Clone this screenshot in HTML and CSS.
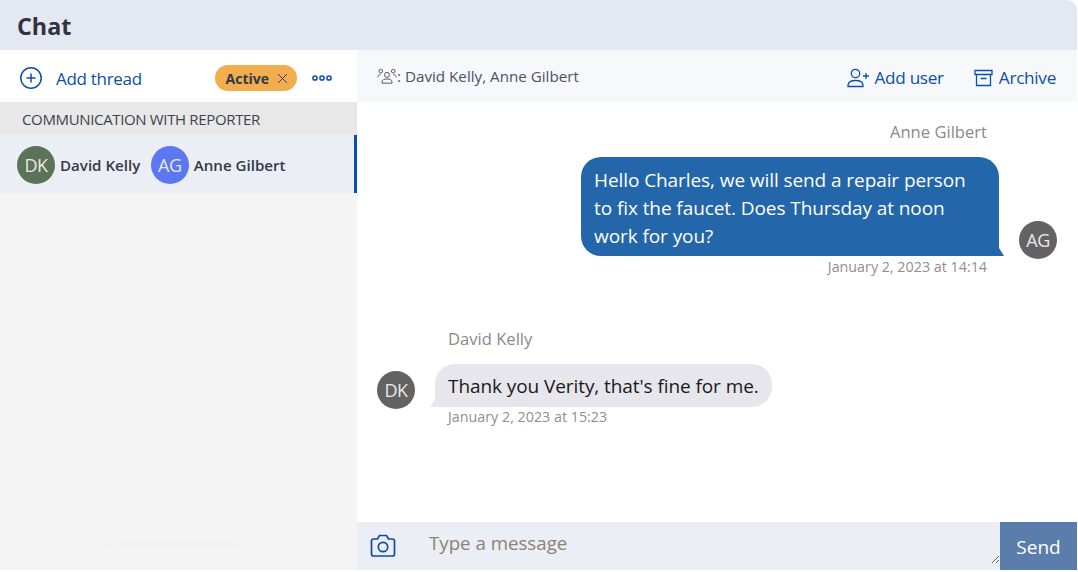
FILE: index.html
```html
<!DOCTYPE html>
<html lang="en">

<head>
    <meta charset="UTF-8">
    <title>Chat</title>
    <link rel="stylesheet" href="styles.css">
</head>

<body>
    <div class="chat">
        <div class="heading">
            <h1>Chat</h1>
        </div>

        <div class="columns">
            <div class="sidebar">
                <div class="thread-tools">
                    <svg class="icon-add" width="24" height="24" viewBox="0 0 24 24" fill="none" stroke="#0b4eac" stroke-width="1.5">
                        <circle cx="12" cy="12" r="10.2" />
                        <path d="M12 7.5v9M7.5 12h9" />
                    </svg>
                    <span class="add-thread">Add thread</span>
                    <span class="status-pill">Active
                        <svg width="11" height="11" viewBox="0 0 11 11" fill="none" stroke="#3a3a3a" stroke-width="1">
                            <path d="M1 1l9 9M10 1l-9 9" />
                        </svg>
                    </span>
                    <svg class="icon-more" width="20" height="6" viewBox="0 0 20 6" fill="none" stroke="#0b4eac" stroke-width="1.5">
                        <circle cx="3" cy="3" r="2.1" />
                        <circle cx="10" cy="3" r="2.1" />
                        <circle cx="17" cy="3" r="2.1" />
                    </svg>
                </div>
                <div class="group-title">COMMUNICATION WITH REPORTER</div>
                <div class="thread">
                    <span class="avatar green">DK</span>
                    <span class="thread-name">David Kelly</span>
                    <span class="avatar blue">AG</span>
                    <span class="thread-name">Anne Gilbert</span>
                </div>
            </div>

            <div class="main">
                <div class="toolbar">
                    <div class="people">
                        <svg width="20" height="17" viewBox="0 0 24 20" fill="none" stroke="#555b68" stroke-width="1.2">
                            <circle cx="12" cy="8" r="3" />
                            <circle cx="4.5" cy="3.5" r="2.2" />
                            <circle cx="19.5" cy="3.5" r="2.2" />
                            <path d="M6 18v-1.500c0-2.500 2.500-3.500 6-3.500s6 1 6 3.500V18zM1 11c0-2 1.500-3.500 3.500-3.500M23 11c0-2-1.500-3.500-3.500-3.500" />
                        </svg>
                        <span>: David Kelly, Anne Gilbert</span>
                    </div>
                    <div class="actions">
                        <span class="action">
                            <svg width="24" height="20" viewBox="0 0 24 20" fill="none" stroke="#0b4eac" stroke-width="1.300">
                                <circle cx="8.500" cy="5.500" r="4.200" />
                                <path d="M1 18.500v-1c0-3.500 3-5 7.500-5s7.500 1.500 7.500 5v1zM19 5v6M16 8h6" />
                            </svg>
                            Add user
                        </span>
                        <span class="action archive">
                            <svg width="19" height="18" viewBox="0 0 19 18" fill="none" stroke="#0b4eac" stroke-width="1.300">
                                <path d="M1 1.500h17v4H1zM2.500 5.500v11h14v-11M6.500 9.500h6" />
                            </svg>
                            Archive
                        </span>
                    </div>
                </div>

                <div class="messages">
                    <div class="message outgoing">
                        <div class="message-body">
                            <div class="sender">Anne Gilbert</div>
                            <div class="bubble">Hello Charles, we will send a repair person to fix the faucet. Does Thursday at noon work for you?</div>
                            <div class="time">January 2, 2023 at 14:14</div>
                        </div>
                        <span class="avatar grey">AG</span>
                    </div>
                    <div class="message incoming">
                        <span class="avatar grey">DK</span>
                        <div class="message-body">
                            <div class="sender">David Kelly</div>
                            <div class="bubble">Thank you Verity, that's fine for me.</div>
                            <div class="time">January 2, 2023 at 15:23</div>
                        </div>
                    </div>
                </div>

                <div class="composer">
                    <svg class="icon-camera" width="26" height="23" viewBox="0 0 26 23" fill="none" stroke="#0b4eac" stroke-width="1.700">
                        <path d="M3.500 5h4l2-3.500h7l2 3.500h4a2 2 0 0 1 2 2v13a2 2 0 0 1-2 2h-19a2 2 0 0 1-2-2V7a2 2 0 0 1 2-2z" />
                        <circle cx="13" cy="13" r="4.700" />
                    </svg>
                    <textarea class="message-input" placeholder="Type a message"></textarea>
                    <button class="send" type="button">Send</button>
                </div>
            </div>
        </div>
    </div>
</body>

</html>
```

FILE: styles.css
```css
body {
    margin: 0;
    background: #fff;
    font-family: "Open Sans", sans-serif;
    color: #323a47;
    overflow: hidden;
}

.chat {
    width: 1077px;
    height: 570px;
    display: flex;
    flex-direction: column;
}

.heading {
    height: 50px;
    padding: 2px 0 0 17px;
    box-sizing: border-box;
    display: flex;
    align-items: center;
    background: #e4e8f1;
    border-top-right-radius: 10px;
    flex: none;
}

h1 {
    margin: 0;
    font-size: 23.3px;
    font-weight: 700;
    color: #30343f;
}

.columns {
    flex: 1;
    display: flex;
    min-height: 0;
}

.sidebar {
    width: 357px;
    flex: none;
    background: radial-gradient(ellipse 130px 4px at 175px 493px, #f0f0f0, #f4f4f4);
    background-color: #f4f4f4;
}

.thread-tools {
    height: 52px;
    padding: 4px 25px 0 19px;
    box-sizing: border-box;
    display: flex;
    align-items: center;
    background: #fff;
}

.icon-add {
    flex: none;
}

.add-thread {
    margin-left: 13px;
    font-size: 17px;
    color: #0b4eac;
    letter-spacing: -0.3px;
}

.status-pill {
    margin-left: auto;
    height: 26px;
    padding: 0 9px 0 11px;
    display: flex;
    align-items: center;
    gap: 8px;
    border-radius: 13px;
    background: #f1ad4e;
    font-size: 14px;
    font-weight: 700;
    color: #323a47;
}

.icon-more {
    margin-left: 15px;
}

.group-title {
    height: 33px;
    padding: 1px 0 0 22px;
    box-sizing: border-box;
    display: flex;
    align-items: center;
    background: #e8e8e8;
    font-size: 15px;
    letter-spacing: -0.35px;
    color: #3d4450;
}

.thread {
    height: 58px;
    padding: 2px 0 0 17px;
    box-sizing: border-box;
    display: flex;
    align-items: center;
    background: #ebeef5;
    border-right: 3px solid #0b4eac;
}

.thread-name {
    margin-left: 5px;
    margin-right: 10.5px;
    font-size: 15.1px;
    font-weight: 600;
    color: #343a46;
}

.avatar {
    width: 38px;
    height: 38px;
    flex: none;
    display: flex;
    align-items: center;
    justify-content: center;
    border-radius: 50%;
    font-size: 18px;
    letter-spacing: -0.5px;
    color: #e8e8e8;
}

.avatar.green {
    background: #5b7356;
}

.avatar.blue {
    background: #5b78f0;
}

.avatar.grey {
    background: #636363;
}

.main {
    flex: 1;
    min-width: 0;
    display: flex;
    flex-direction: column;
}

.toolbar {
    height: 52px;
    flex: none;
    padding: 0 21px 0 20px;
    box-sizing: border-box;
    display: flex;
    align-items: center;
    justify-content: space-between;
    background: #f7f8fb;
}

.people {
    display: flex;
    align-items: center;
    font-size: 15.2px;
    color: #4a5262;
}

.actions {
    display: flex;
    gap: 30px;
    margin-top: 3px;
}

.action {
    display: flex;
    align-items: center;
    gap: 3px;
    font-size: 17.2px;
    letter-spacing: -0.3px;
    color: #0b4eac;
}

.action.archive {
    gap: 6px;
}

.messages {
    flex: 1;
    min-height: 0;
    padding: 19px 20px 0;
    background: #fff;
}

.message {
    display: flex;
}

.message.outgoing {
    justify-content: flex-end;
    align-items: flex-start;
    gap: 20px;
    height: 207px;
}

.message.outgoing .avatar {
    margin-top: 100px;
}

.message.incoming {
    align-items: flex-start;
    gap: 20px;
}

.message.incoming .avatar {
    margin-top: 43px;
}

.sender {
    margin: -1px 0 14px;
    font-size: 16.6px;
    color: #8a8a8a;
}

.outgoing .sender {
    text-align: right;
    padding-right: 12px;
}

.incoming .sender {
    padding-left: 13px;
}

.bubble {
    position: relative;
    padding: 8px 13px 7px;
    border-radius: 20px;
    font-size: 19px;
    line-height: 28px;
    letter-spacing: -0.08px;
}

.outgoing .bubble {
    width: 418px;
    box-sizing: border-box;
    padding: 9px 13px 6px;
    background: #2366aa;
    color: #fff;
    border-bottom-right-radius: 0;
}

.outgoing .bubble::after {
    content: "";
    position: absolute;
    right: -5px;
    bottom: 0;
    border-left: 5px solid #2366aa;
    border-top: 8px solid transparent;
}

.incoming .bubble {
    background: #e6e6ec;
    color: #1a1a1a;
    border-bottom-left-radius: 0;
}

.incoming .bubble::after {
    content: "";
    position: absolute;
    left: -5px;
    bottom: 0;
    border-right: 5px solid #e6e6ec;
    border-top: 8px solid transparent;
}

.time {
    margin-top: 1px;
    font-size: 14.3px;
    color: #8f8f8f;
}

.outgoing .time {
    text-align: right;
    padding-right: 12px;
}

.incoming .time {
    margin-top: 0;
    padding-left: 13px;
}

.composer {
    height: 48px;
    flex: none;
    display: flex;
    align-items: flex-start;
    background: #ebeef4;
}

.icon-camera {
    flex: none;
    margin: 12px 0 0 13px;
}

.message-input {
    flex: 1;
    min-width: 0;
    height: 42px;
    box-sizing: border-box;
    margin-left: 19px;
    padding: 8px 14px 0 14px;
    border: none;
    outline: none;
    background: transparent;
    font-family: "Open Sans", sans-serif;
    font-size: 18.7px;
    color: #333;
    resize: both;
}

.message-input::placeholder {
    color: #8a8478;
    opacity: 1;
}

.send {
    width: 77px;
    height: 48px;
    flex: none;
    padding: 2px 0 0;
    border: none;
    background: #5b7dab;
    color: #fff;
    font-family: "Open Sans", sans-serif;
    font-size: 19px;
}
```
